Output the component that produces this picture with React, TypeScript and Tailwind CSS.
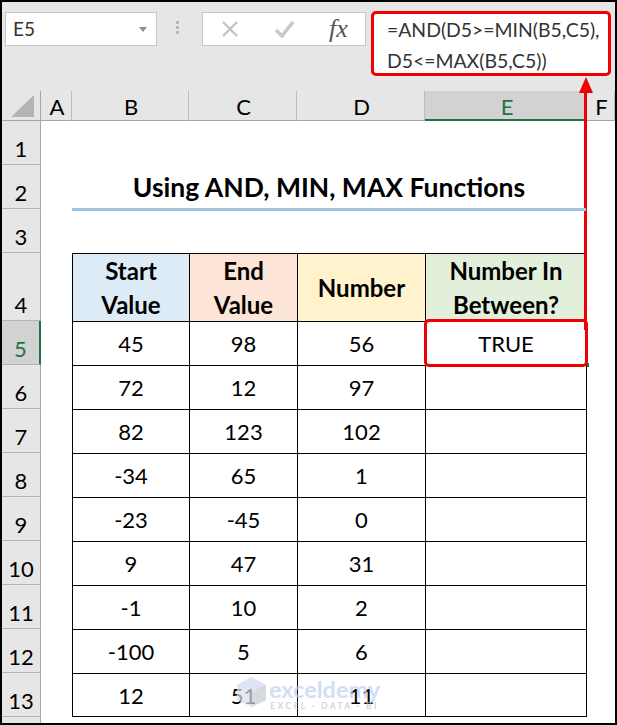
import React from "react";

const font = { fontFamily: "Lato, 'Open Sans', sans-serif" };

const rows = [
  ["45", "98", "56", "TRUE"],
  ["72", "12", "97", ""],
  ["82", "123", "102", ""],
  ["-34", "65", "1", ""],
  ["-23", "-45", "0", ""],
  ["9", "47", "31", ""],
  ["-1", "10", "2", ""],
  ["-100", "5", "6", ""],
  ["12", "51", "11", ""],
];

const columns = ["A", "B", "C", "D", "E", "F"];

function RowHead({ n, active, tall }: { n: string; active?: boolean; tall?: boolean }) {
  return (
    <div
      className={
        "flex items-end justify-center text-[22px] leading-[30px] border-b border-[#b4b4b4] " +
        (tall ? "h-[68px] " : "h-[44px] ") +
        (active
          ? "bg-[#d2d2d2] text-[#217346] border-r-2 border-r-[#217346]"
          : "bg-[#e6e6e6] text-black border-r border-r-[#a6a6a6]")
      }
    >
      {n}
    </div>
  );
}

function Cell({ children, last, right, bg, bold }: { children?: React.ReactNode; last?: boolean; right?: boolean; bg?: string; bold?: boolean }) {
  return (
    <div
      className={
        "flex items-center justify-center text-center border-l border-t border-black text-black " +
        (last ? "border-b " : "") +
        (right ? "border-r " : "") +
        (bold ? "h-[68px] font-bold text-[24px] leading-[34px] pt-[1px] " : "text-[22px] ") +
        (bg || "bg-white")
      }
    >
      {children}
    </div>
  );
}

function Toolbar() {
  return (
    <div className="h-[89px] flex items-start pt-[10px] bg-[#e6e6e6]">
      <div className="ml-[3px] w-[152px] h-[34px] bg-white border border-[#c6c6c6] flex items-center justify-between pl-[7px] pr-[9px] text-[19px] text-[#333]">
        <span>E5</span>
        <svg width="8" height="5" viewBox="0 0 8 5">
          <path d="M0 0h8L4 5z" fill="#8c8c8c" />
        </svg>
      </div>
      <div className="ml-[19px] mt-[9px] flex flex-col gap-[2px]">
        <div className="w-[3px] h-[3px] bg-[#b8b8b8]" />
        <div className="w-[3px] h-[3px] bg-[#b8b8b8]" />
        <div className="w-[3px] h-[3px] bg-[#b8b8b8]" />
      </div>
      <div className="ml-[23px] w-[164px] h-[34px] bg-white border border-[#c6c6c6] flex items-center pl-[18px]">
        <svg width="18" height="18" viewBox="0 0 18 18">
          <path d="M2 2l14 14M16 2L2 16" stroke="#c4c4c4" strokeWidth="2.4" fill="none" />
        </svg>
        <svg className="ml-[36px]" width="20" height="18" viewBox="0 0 20 18">
          <path d="M1 10l6 6L18 2" stroke="#c9c9c9" strokeWidth="3.6" fill="none" />
        </svg>
        <span className="ml-[34px] text-[26px] leading-none italic text-[#555]" style={{ fontFamily: "'Liberation Serif', serif" }}>
          fx
        </span>
      </div>
      <div className="ml-[5px] -mt-[1px] w-[240px] h-[65px] bg-white border-[3px] border-[#f00000] rounded-[5px] pl-[13px] text-[19.4px] leading-[31px] text-[#333] whitespace-nowrap">
        <div>=AND(D5&gt;=MIN(B5,C5),</div>
        <div>D5&lt;=MAX(B5,C5))</div>
      </div>
    </div>
  );
}

export default function App() {
  return (
    <div className="relative w-[617px] h-[725px] border-2 border-black bg-white overflow-hidden" style={font}>
      <Toolbar />
      <div className="grid grid-cols-[39px_31px_117px_108px_128px_162px_28px]">
        {/* column headers */}
        <div className="h-[30px] bg-[#e6e6e6] border-b border-[#a6a6a6] border-r border-r-[#a6a6a6] flex items-center justify-center pl-[1px]">
          <svg width="24" height="24" viewBox="0 0 24 24">
            <path d="M24 1v22H1z" fill="#b4b4b4" />
          </svg>
        </div>
        {columns.map((c) => (
          <div
            key={c}
            className={
              "h-[30px] flex items-center justify-center text-[22px] leading-none pt-[3px] pl-[2px] " +
              (c === "E"
                ? "bg-[#d2d2d2] text-[#217346] border-b-2 border-[#217346]"
                : "bg-[#e6e6e6] text-black border-b border-[#a6a6a6] border-r border-r-[#bdbdbd]")
            }
          >
            {c}
          </div>
        ))}

        <RowHead n="1" />
        <div className="col-span-6" />

        <RowHead n="2" />
        <div />
        <div className="col-span-4 h-[46px] -mb-[2px] mr-[1px] border-b-[3px] border-[#9dc3e6] flex items-center justify-center pt-[2px] text-[26.5px] font-bold text-black z-10">
          Using AND, MIN, MAX Functions
        </div>
        <div />

        <RowHead n="3" />
        <div className="col-span-6" />

        <RowHead n="4" tall />
        <div />
        <Cell bold bg="bg-[#ddebf7]">Start<br />Value</Cell>
        <Cell bold bg="bg-[#fce4d6]">End<br />Value</Cell>
        <Cell bold bg="bg-[#fff2cc]">Number</Cell>
        <Cell bold right bg="bg-[#e2efda]">Number In<br />Between?</Cell>
        <div />

        {rows.map((r, i) => {
          const last = i === rows.length - 1;
          return (
            <React.Fragment key={i}>
              <RowHead n={String(i + 5)} active={i === 0} />
              <div />
              <Cell last={last}>{r[0]}</Cell>
              <Cell last={last}>{r[1]}</Cell>
              <Cell last={last}>{r[2]}</Cell>
              <Cell last={last} right>{r[3]}</Cell>
              <div />
            </React.Fragment>
          );
        })}

        <div className="h-[6px] bg-[#e6e6e6] border-r border-[#a6a6a6]" />
        <div className="col-span-6" />
      </div>

      {/* red highlight round the selected cell and the arrow to the formula */}
      <div className="absolute left-[422px] top-[317px] w-[164px] h-[48px] border-[3px] border-[#f00000] rounded-[5px]" />
      <div className="absolute left-[585px] top-[361px] w-[2px] h-[4px] bg-[#217346]" />
      <div className="absolute left-[582px] top-[87px] w-[3px] h-[241px] bg-[#f00000]" />
      <svg className="absolute left-[577px] top-[75px]" width="14" height="16" viewBox="0 0 14 16">
        <path d="M7 0l7 16H0z" fill="#f00000" />
      </svg>

      {/* watermark */}
      <div className="absolute left-[235px] top-[675px] flex items-start opacity-70">
        <svg width="29" height="30" viewBox="0 0 29 30">
          <path d="M14.5 0L29 8v15l-14.5 7L0 23V8z" fill="#d9dee8" />
          <path d="M14.5 0L29 8l-14.5 7L0 8z" fill="#cfd9ee" />
          <path d="M14.5 15L29 8v15l-14.5 7z" fill="#c6c9d0" />
        </svg>
        <div className="ml-[3px] flex flex-col items-center">
          <span className="text-[23.5px] leading-[24px] font-bold text-[#c2d0f2]">exceldemy</span>
          <span className="text-[8.5px] leading-[10px] font-bold tracking-[2.4px] text-[#c4c4c4]">EXCEL · DATA · BI</span>
        </div>
      </div>
    </div>
  );
}
